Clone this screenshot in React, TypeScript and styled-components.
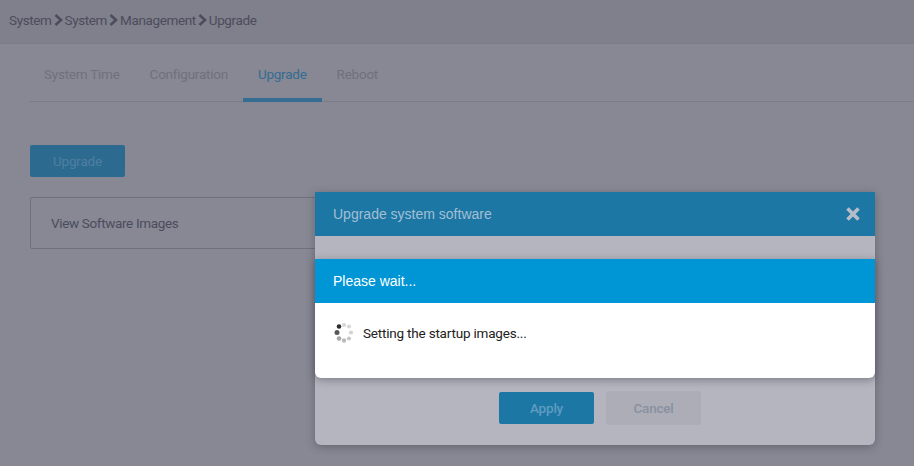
import React from 'react'
import styled, { createGlobalStyle } from 'styled-components'

const GlobalStyle = createGlobalStyle`
  html, body {
    margin: 0;
    padding: 0;
    background: #878894;
  }
  * { box-sizing: border-box; }
`

const tabs = ['System Time', 'Configuration', 'Upgrade', 'Reboot']
const crumbs = ['System', 'System', 'Management', 'Upgrade']
const dots = [
  { x: 5, y: 3.5, o: 0.95, r: 2.3 },
  { x: 3, y: 9.5, o: 0.75, r: 2.5 },
  { x: 5, y: 15.5, o: 0.4, r: 2.3 },
  { x: 10, y: 17.5, o: 0.3, r: 2.2 },
  { x: 15, y: 15.5, o: 0.25, r: 2.1 },
  { x: 17, y: 9.5, o: 0.2, r: 2.1 },
  { x: 15, y: 3.5, o: 0.18, r: 2.1 },
  { x: 10, y: 2, o: 0.18, r: 2.1 },
]

function Chevron() {
  return (
    <ChevronIcon width='9' height='12' viewBox='0 0 9 12'>
      <path d='M1.5 1 L7 6 L1.5 11' fill='none' stroke='#4b4c5c' strokeWidth='2.6' />
    </ChevronIcon>
  )
}

function App() {
  return (
    <Page>
      <GlobalStyle />
      <Breadcrumb>
        {crumbs.map((c, i) => (
          <React.Fragment key={i}>
            {i > 0 && <Chevron />}
            <span>{c}</span>
          </React.Fragment>
        ))}
      </Breadcrumb>
      <Content>
        <TabBar>
          {tabs.map((t) => (
            <Tab key={t} $active={t === 'Upgrade'}>{t}</Tab>
          ))}
        </TabBar>
        <UpgradeButton>Upgrade</UpgradeButton>
        <ImagesPanel>View Software Images</ImagesPanel>
      </Content>

      <Modal>
        <ModalHeader>
          <span>Upgrade system software</span>
          <svg width='16' height='16' viewBox='0 0 16 16'>
            <path d='M2.5 2.5 L13.5 13.5 M13.5 2.5 L2.5 13.5' stroke='#b6bdc9' strokeWidth='3.6' />
          </svg>
        </ModalHeader>
        <ModalFooter>
          <ApplyButton>Apply</ApplyButton>
          <CancelButton>Cancel</CancelButton>
        </ModalFooter>
        <WaitDialog>
          <WaitHeader>Please wait...</WaitHeader>
          <WaitBody>
            <svg width='20' height='20' viewBox='0 0 20 20'>
              {dots.map((d, i) => (
                <circle key={i} cx={d.x} cy={d.y} r={d.r} fill='#222' fillOpacity={d.o} />
              ))}
            </svg>
            <span>Setting the startup images...</span>
          </WaitBody>
        </WaitDialog>
      </Modal>
    </Page>
  )
}

export default App

const uiFont = `Roboto, 'Noto Sans', sans-serif`

const Page = styled.div`
  position: relative;
  width: 914px;
  height: 466px;
  overflow: hidden;
  background: #878894;
  font-family: ${uiFont};
  font-size: 13.5px;
  letter-spacing: -0.2px;
`

const Breadcrumb = styled.div`
  height: 44px;
  padding: 0 0 4px 9px;
  display: flex;
  align-items: center;
  gap: 2px;
  background: #7f808c;
  border-bottom: 1px solid #7a7b87;
  color: #4b4c5c;
  letter-spacing: -0.38px;
`

const ChevronIcon = styled.svg`
  flex: none;
`

const Content = styled.div`
  padding: 14px 0 0 30px;
`

const TabBar = styled.div`
  display: flex;
  height: 44px;
  margin-left: -1px;
  border-bottom: 1px solid #7b7c88;
`

const Tab = styled.div<{ $active?: boolean }>`
  height: 44px;
  padding: 6px 15px 0;
  line-height: 20px;
  letter-spacing: -0.24px;
  color: ${(p) => (p.$active ? '#356c92' : '#6f707c')};
  border-bottom: 4px solid ${(p) => (p.$active ? '#356c92' : 'transparent')};
`

const UpgradeButton = styled.div`
  width: 95px;
  height: 32px;
  margin-top: 43px;
  display: flex;
  align-items: center;
  justify-content: center;
  background: #2d6a90;
  border-radius: 2px;
  color: #4f7f9f;
`

const ImagesPanel = styled.div`
  width: 400px;
  height: 52px;
  margin-top: 20px;
  padding-left: 20px;
  display: flex;
  align-items: center;
  border: 1px solid #6f707c;
  border-radius: 2px;
  color: #4b4c5c;
  letter-spacing: -0.35px;
`

const Modal = styled.div`
  position: absolute;
  left: 315px;
  top: 192px;
  width: 560px;
  height: 253px;
  display: flex;
  flex-direction: column;
  justify-content: space-between;
  background: #b5b5bf;
  border-radius: 0 0 6px 6px;
  box-shadow: 0 2px 8px rgba(40, 40, 50, 0.35);
`

const ModalHeader = styled.div`
  height: 44px;
  padding: 0 14px 0 18px;
  display: flex;
  align-items: center;
  justify-content: space-between;
  background: #1c77a5;
  color: #a3bfd3;
  font-family: 'Liberation Sans', Arial, sans-serif;
  font-size: 14px;
  letter-spacing: 0;
`

const ModalFooter = styled.div`
  display: flex;
  align-items: center;
  gap: 12px;
  padding: 0 0 20px 184px;
`

const ApplyButton = styled.div`
  width: 95px;
  height: 32px;
  display: flex;
  align-items: center;
  justify-content: center;
  background: #1c77a5;
  border-radius: 2px;
  color: #5f9cc0;
  font-weight: 500;
`

const CancelButton = styled.div`
  width: 95px;
  height: 34px;
  display: flex;
  align-items: center;
  justify-content: center;
  background: #adadb7;
  border-radius: 2px;
  color: #8791a1;
  font-weight: 500;
`

const WaitDialog = styled.div`
  position: absolute;
  left: 0;
  top: 67px;
  width: 560px;
  height: 119px;
  background: #fff;
  border-radius: 0 0 6px 6px;
  box-shadow: 0 2px 8px rgba(40, 40, 50, 0.4);
`

const WaitHeader = styled.div`
  height: 44px;
  padding-left: 18px;
  display: flex;
  align-items: center;
  background: #0096d6;
  color: #fff;
  font-family: 'Liberation Sans', Arial, sans-serif;
  font-size: 14px;
  letter-spacing: 0;
`

const WaitBody = styled.div`
  padding: 20px 0 0 19px;
  display: flex;
  align-items: center;
  gap: 9px;
  color: #222;
`
